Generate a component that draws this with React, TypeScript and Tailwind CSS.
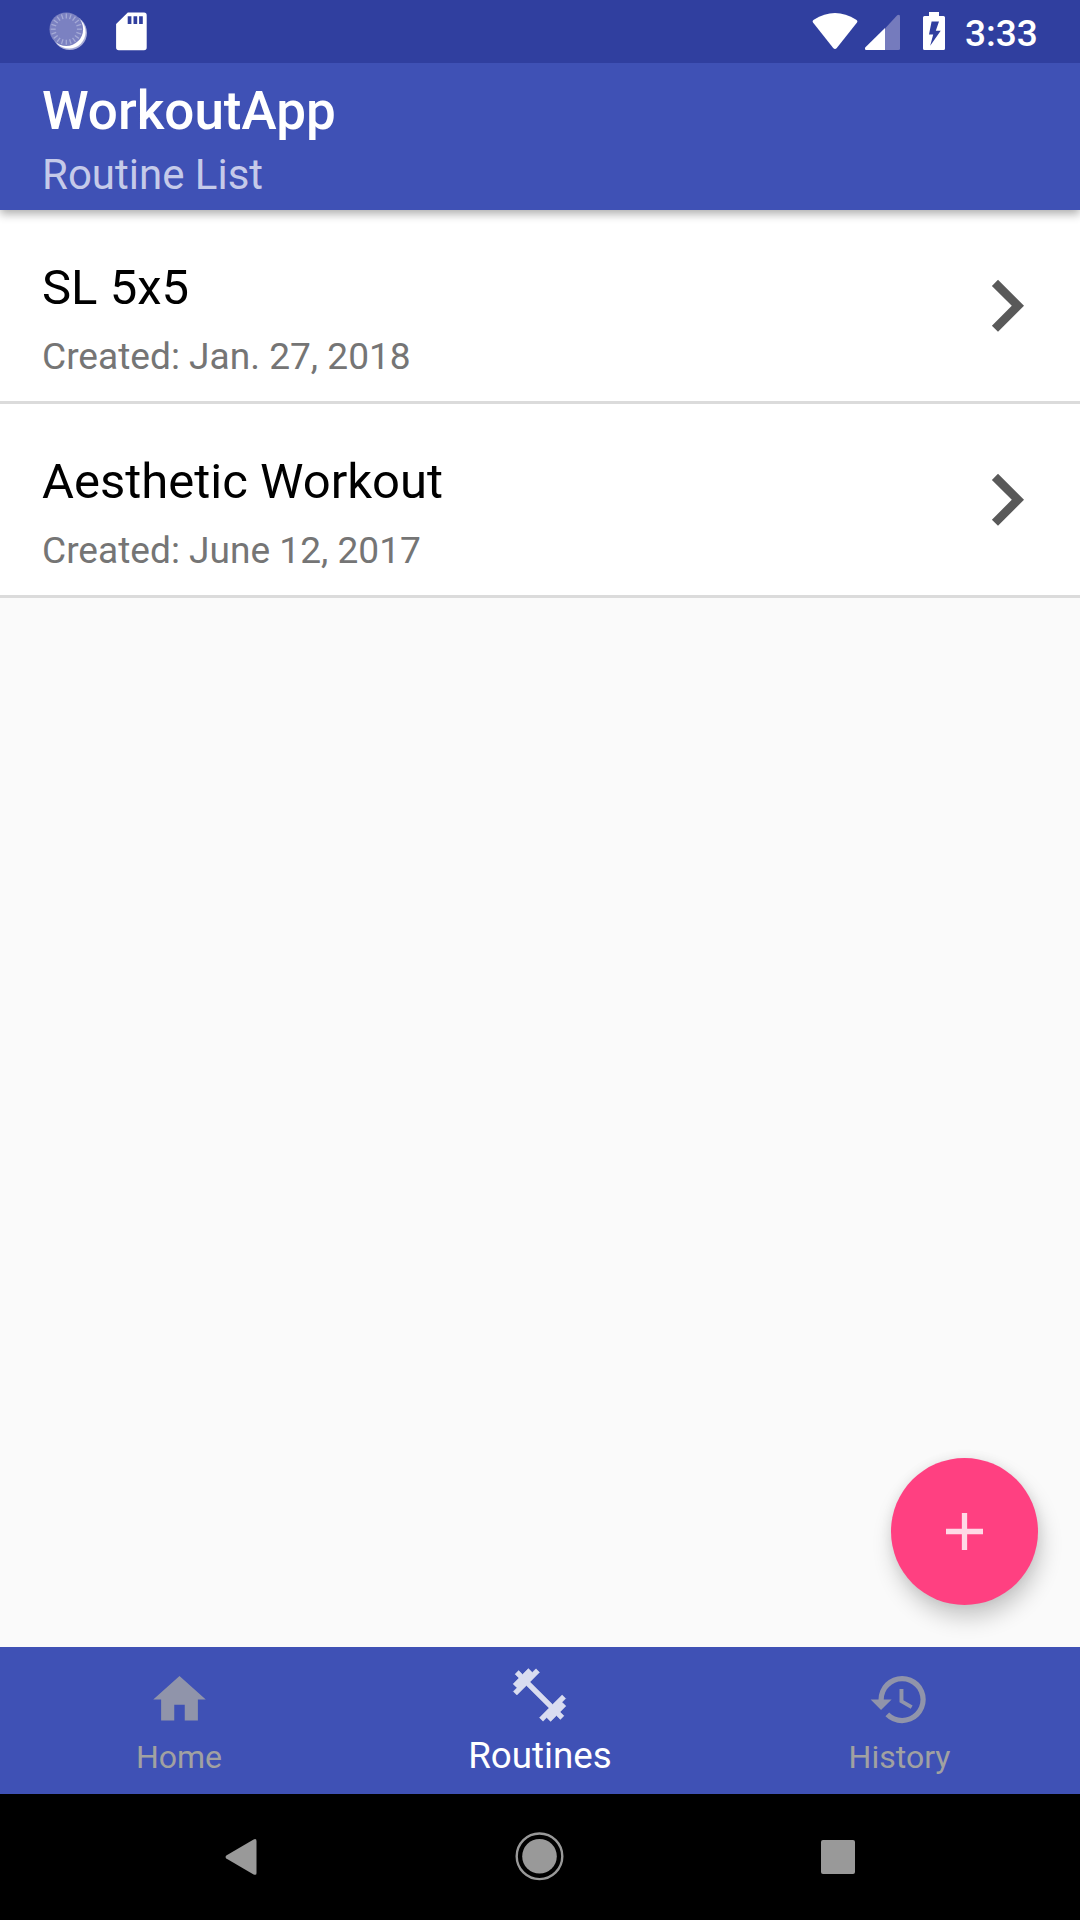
const routines = [
  { name: "SL 5x5", created: "Created: Jan. 27, 2018" },
  { name: "Aesthetic Workout", created: "Created: June 12, 2017" },
];

const ticks = Array.from({ length: 20 }, (_, i) => i * 18);

function StatusBar() {
  return (
    <div className="relative z-20 flex h-[63px] items-start bg-[#303f9f] pt-3 pl-[49px] text-white">
      <svg className="h-10 w-10" viewBox="49 12 40 40">
        <circle cx="69.7" cy="32.8" r="17.3" fill="#a9aed8" />
        <circle cx="69" cy="32" r="16.6" fill="#fff" />
        <circle cx="66.3" cy="29.2" r="16.8" fill="#7b81c1" />
        {ticks.map((a) => (
          <path key={a} d="M66.3 13.6v5" stroke="#a5aad6" strokeWidth="1.3" transform={`rotate(${a} 66.3 29.2)`} />
        ))}
      </svg>
      <svg className="ml-[26px] h-[39px] w-8" viewBox="115 12 32 39" fill="currentColor">
        <path
          fillRule="evenodd"
          d="M127.8 12.5H144a2.7 2.7 0 0 1 2.7 2.7v32.3a2.7 2.7 0 0 1-2.7 2.7h-25.2a2.7 2.7 0 0 1-2.7-2.7V24zM127.7 16.3V24h3.7v-7.7zM133.5 16.3V24h3.7v-7.7zM139.1 16.3V24h3.7v-7.7z"
        />
      </svg>
      <svg className="ml-[665px] h-[39px] w-[46px] shrink-0" viewBox="812 12 46 39" fill="currentColor">
        <path d="M813 22.6C812.3 21.4 812.6 20.6 813.8 19.8C828 10.8 842 10.8 856.2 19.8C857.4 20.6 857.7 21.4 857 22.6L836.8 48Q835 50 833.2 48Z" />
      </svg>
      <svg className="ml-[7px] h-[39px] w-[35px] shrink-0" viewBox="865 12 35 39">
        <path d="M885 28.5 897.2 15.3Q900 13.5 900 16.5V48.5Q900 50 898.5 50H885Z" fill="#757bbd" />
        <path d="M885 28V50H866Q864.5 49.5 865.2 47.5Z" fill="#fff" />
      </svg>
      <svg className="ml-[23px] h-[39px] w-[22px] shrink-0" viewBox="923 12 22 39" fill="currentColor">
        <path
          fillRule="evenodd"
          d="M929 12h10v4h4.500a1.500 1.500 0 0 1 1.500 1.500v31a1.500 1.500 0 0 1-1.500 1.500h-19a1.500 1.500 0 0 1-1.500-1.500v-31a1.500 1.500 0 0 1 1.500-1.500h4.500zM931.600 21.600 929 34.500h4.200L930.200 45.800 940.700 30.800h-4.900L939 21.600z"
        />
      </svg>
      <span className="ml-5 text-[37px] leading-[44px] font-medium">3:33</span>
    </div>
  );
}

function Header() {
  return (
    <header className="relative z-10 h-[147px] bg-[#3f51b5] pt-[17px] pl-[42px] shadow-[0_4px_9px_rgba(0,0,0,0.32)]">
      <h1 className="text-[53px] leading-[62px] font-medium text-white">WorkoutApp</h1>
      <p className="mt-2 text-[42px] leading-[50px] text-[#c5cae9]">Routine List</p>
    </header>
  );
}

function RoutineRow({ name, created }: { name: string; created: string }) {
  return (
    <li className="flex h-[194px] items-center justify-between border-b-[3px] border-[#dbdbdb] bg-white pr-[56px] pl-[42px]">
      <div className="h-full pt-[49px]">
        <div className="text-[49px] leading-[58px] text-black">{name}</div>
        <div className="mt-[18px] text-[37.100px] leading-[44px] text-[#757575]">{created}</div>
      </div>
      <svg className="h-[53px] w-[33px]" viewBox="990.700 278.500 33 53" fill="#595959">
        <path d="M997.700 279.300 1023.700 305.300 997.700 331.300 991.600 325.200 1011.500 305.300 991.600 285.400z" />
      </svg>
    </li>
  );
}

function BottomNav() {
  return (
    <nav className="grid h-[147px] grid-cols-3 bg-[#3f51b5]">
      <div className="flex flex-col items-center pt-[21px] pr-[2px] text-[#a1a1a1]">
        <svg className="h-[63px] w-[63px]" viewBox="0 0 24 24" fill="#9094aa">
          <path d="M10 20v-6h4v6h5v-8h3L12 3 2 12h3v8z" />
        </svg>
        <span className="mt-[7px] text-[32px] leading-[38px]">Home</span>
      </div>
      <div className="flex flex-col items-center pt-4 text-white">
        <svg className="h-16 w-16" viewBox="-31.500 -32 64 64" fill="#d9dcf0">
          <g transform="rotate(45)">
            <path
              stroke="#d9dcf0"
              strokeWidth="0.5"
              strokeLinejoin="round"
              d="M-32-2.500h5.500v-8.300h5.500V-16h5v13.500h32V-16h5v5.200h5.500v8.300H32v5h-5.500v8.300h-5.500V16h-5V2.500h-32V16h-5v-5.200h-5.500V2.500H-32z"
            />
          </g>
        </svg>
        <span className="mt-[7px] text-[36.750px] leading-[44px]">Routines</span>
      </div>
      <div className="flex flex-col items-center pt-[21px] pr-[1px] text-[#a1a1a1]">
        <svg className="h-[63px] w-[63px]" viewBox="0 0 24 24" fill="#9094aa">
          <path d="M13 3a9 9 0 0 0-9 9H1l3.890 3.890.07.14L9 12H6c0-3.870 3.130-7 7-7s7 3.130 7 7-3.130 7-7 7c-1.930 0-3.680-.79-4.940-2.060l-1.420 1.420A8.954 8.954 0 0 0 13 21a9 9 0 0 0 0-18zm-1 5v5l4.280 2.540.72-1.210-3.500-2.080V8z" />
        </svg>
        <span className="mt-[7px] text-[32px] leading-[38px]">History</span>
      </div>
    </nav>
  );
}

function SystemNav() {
  return (
    <div className="flex h-[126px] items-center bg-black pl-[225px] text-[#999999]">
      <svg className="h-9 w-8" viewBox="225 1839 32 36" fill="currentColor">
        <path d="M226.300 1855.500 253.600 1839.500Q256.500 1838.200 256.500 1841V1873Q256.500 1875.800 253.600 1874.400L226.300 1858.500Q224.800 1857 226.300 1855.500Z" />
      </svg>
      <svg className="ml-[257px] h-[50px] w-[50px]" viewBox="-25.500 -24.300 50 50">
        <circle r="22.800" fill="none" stroke="currentColor" strokeWidth="2.400" />
        <circle r="17.300" fill="currentColor" />
      </svg>
      <div className="ml-[257px] h-[34px] w-[33.500px] rounded-[2px] bg-[#999999]" />
    </div>
  );
}

export default function App() {
  return (
    <div className="flex h-[1920px] w-[1080px] flex-col overflow-hidden bg-[#fafafa] font-[Roboto,sans-serif]">
      <StatusBar />
      <Header />
      <main className="relative flex-1">
        <ul>
          {routines.map((r) => (
            <RoutineRow key={r.name} {...r} />
          ))}
        </ul>
        <button className="absolute right-[42px] bottom-[42px] flex h-[147px] w-[147px] items-center justify-center rounded-full bg-[#ff4081] shadow-[3px_13px_22px_rgba(0,0,0,0.2),0_0_12px_rgba(0,0,0,0.07)]">
          <svg className="h-[37px] w-[37px]" viewBox="0 0 14 14" fill="#ffd9e6">
            <path d="M14 8H8v6H6V8H0V6h6V0h2v6h6z" />
          </svg>
        </button>
      </main>
      <BottomNav />
      <SystemNav />
    </div>
  );
}
